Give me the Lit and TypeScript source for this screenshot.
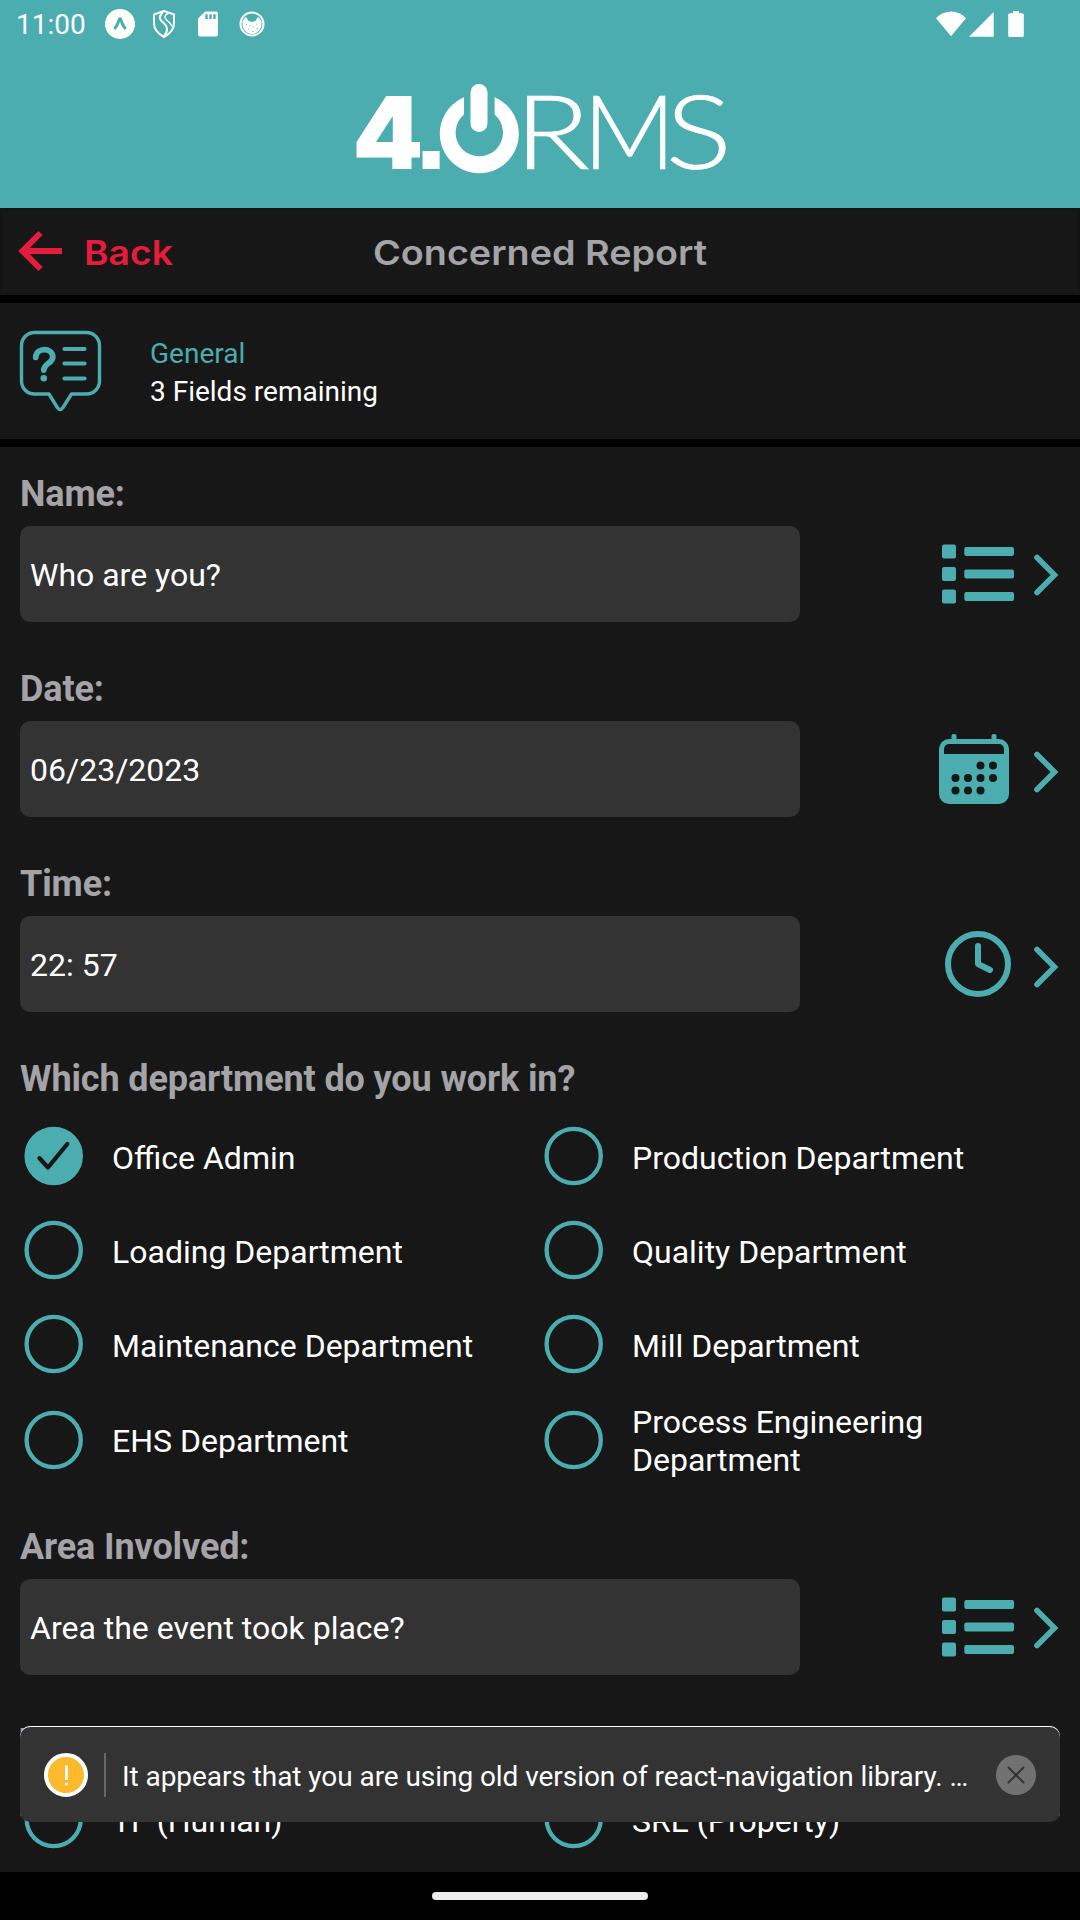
import { LitElement, html, css, svg, nothing } from "lit";
import { customElement, property } from "lit/decorators.js";

type IconName = "list" | "calendar" | "clock";

const calendarDots = [
  [42.5, 36.5], [55, 36.5],
  [17.5, 49], [30, 49], [42.5, 49], [55, 49],
  [17.5, 61.5], [30, 61.5], [42.5, 61.5],
];

const icons = {
  list: svg`${[10.5, 33, 55.5].map(
    (y) => svg`<rect x="4" y=${y} width="14" height="14" rx="2"/><rect x="26.3" y=${y + 2.6} width="49.7" height="9" rx="2"/>`
  )}`,
  calendar: svg`
    <path fill-rule="evenodd" d="M11 10h50a10 10 0 0 1 10 10v45a10 10 0 0 1-10 10h-50a10 10 0 0 1-10-10v-45a10 10 0 0 1 10-10zM6 25h60v-5a5 5 0 0 0-5-5h-50a5 5 0 0 0-5 5z"/>
    <rect x="13.5" y="5" width="5" height="8" rx="2"/><rect x="53.5" y="5" width="5" height="8" rx="2"/>
    ${calendarDots.map(([x, y]) => svg`<circle class="hole" cx=${x} cy=${y} r="4"/>`)}`,
  clock: svg`<g fill="none" stroke="currentColor" stroke-width="6" stroke-linecap="round" stroke-linejoin="round">
    <circle cx="40" cy="40" r="30"/><path d="M40 22v18l12 6"/></g>`,
};

@customElement("form-field")
class FormField extends LitElement {
  @property() label = "";
  @property() value = "";
  @property() icon: IconName = "list";

  static styles = css`
    :host { display: block; margin-bottom: 46px; }
    .label { font-size: 36px; line-height: 42px; font-weight: 700; letter-spacing: -0.12px; color: #a3a3a8; }
    .row { display: flex; align-items: center; margin-top: 11px; }
    .input {
      box-sizing: border-box; width: 780px; height: 96px; border-radius: 10px;
      background: #333; color: #fff; font-size: 32px; line-height: 98px; padding-left: 10px; white-space: pre;
    }
    .icon { width: 80px; height: 80px; margin-left: auto; color: #4badaf; fill: #4badaf; }
    .hole { fill: #171717; }
    .chevron {
      width: 26px; height: 42px; margin-left: 16px; margin-top: 2px; fill: none;
      stroke: #4badaf; stroke-width: 5.6; stroke-linecap: round;
    }
    .chevron.low { margin-top: 6px; }
  `;

  render() {
    return html`
      <div class="label">${this.label}</div>
      <div class="row">
        <div class="input">${this.value}</div>
        <svg class="icon" viewBox="0 0 80 80">${icons[this.icon]}</svg>
        <svg class="chevron ${this.icon === "list" ? "" : "low"}" viewBox="0 0 26 42"><path d="M3 3.5 20.5 21 3 38.500"/></svg>
      </div>`;
  }
}

@customElement("option-group")
class OptionGroup extends LitElement {
  @property() label = "";
  @property({ attribute: false }) options: string[] = [];
  @property() selected = "";

  static styles = css`
    :host { display: block; }
    .label { font-size: 36px; line-height: 42px; font-weight: 700; letter-spacing: -0.12px; color: #a3a3a8; }
    .grid { display: grid; grid-template-columns: 520px 520px; margin-top: 9px; }
    .option { display: flex; align-items: center; min-height: 94px; padding-left: 4px; }
    .tall { min-height: 98px; }
    .radio { width: 60px; height: 60px; flex: none; fill: none; stroke: #4badaf; stroke-width: 4.3; }
    .on { fill: #4badaf; }
    .tick { stroke: #171717; stroke-linecap: round; stroke-linejoin: round; }
    .text { color: #fff; font-size: 32px; line-height: 38px; margin-left: 28px; padding-top: 3px; width: 380px; }
    .tall .text { padding-top: 1px; }
  `;

  render() {
    return html`
      <div class="label">${this.label}</div>
      <div class="grid">
        ${this.options.map((o, i) => html`
          <div class="option ${i >= 6 ? "tall" : ""}">
            <svg class="radio" viewBox="0 0 60 60">
              <circle class=${o === this.selected ? "on" : ""} cx="29.7" cy="30" r="27.1"/>
              ${o === this.selected ? svg`<path class="tick" d="M15.5 32.2 24 41.5 43.3 18"/>` : nothing}
            </svg>
            <div class="text">${o}</div>
          </div>`)}
      </div>`;
  }
}

@customElement("app-root")
class AppRoot extends LitElement {
  static styles = css`
    :host {
      display: flex; flex-direction: column; position: relative; width: 1080px; height: 1920px;
      overflow: hidden; background: #171717; font-family: Roboto, sans-serif;
    }
    svg { display: block; flex: none; }
    .hero { height: 208px; background: #4badaf; flex: none; }
    .status { display: flex; align-items: center; height: 48px; padding: 0 50px 0 16px; color: #fff; fill: #fff; }
    .time { font-size: 28px; line-height: 48px; width: 89px; padding-top: 2px; }
    .signals { margin-left: auto; }
    .teal { fill: #4badaf; }
    .logo { margin: 22px auto 0; fill: #fff; overflow: visible; }
    .four { font: 900 101px Inter, sans-serif; }
    .dot { font: 700 120px "Liberation Sans", sans-serif; }
    .rms { font: 300 102px Lato, sans-serif; stroke: #fff; stroke-width: 0.6; }
    .appbar { box-sizing: border-box; height: 87px; border: 2px solid #141414; border-top-width: 3px; flex: none; }
    .brand { font: 600 34px Inter, sans-serif; }
    .section {
      display: flex; align-items: center; box-sizing: border-box; height: 152px; flex: none;
      border: solid #000; border-width: 8px 0; padding-left: 18px;
    }
    .bubble { fill: none; stroke: #4badaf; stroke-width: 3.4; stroke-linecap: round; stroke-linejoin: round; }
    .summary { margin-left: 46px; font-size: 28px; line-height: 38px; color: #fff; padding-top: 4px; }
    .group { color: #4badaf; }
    .form { flex: 1; min-height: 0; overflow: hidden; padding: 26px 20px 0; }
    .departments { margin-bottom: 37px; }
    .nav { display: flex; align-items: center; justify-content: center; height: 48px; background: #000; flex: none; }
    .pill { width: 216px; height: 8px; border-radius: 4px; background: #ececec; }
    .toast {
      position: absolute; left: 20px; top: 1726px; box-sizing: border-box; width: 1040px; height: 96px;
      display: flex; align-items: center; background: #333; border-radius: 10px; padding: 2px 24px 0; color: #fff;
      box-shadow: inset 0 1px 0 #fff;
    }
    .rule { width: 2px; height: 44px; background: #666; margin: 0 16px; }
    .message { flex: 1; min-width: 0; font-size: 28px; line-height: 36px; letter-spacing: -0.06px; padding-top: 3px; white-space: nowrap; }
  `;

  render() {
    return html`
      <header class="hero">
        <div class="status">
          <span class="time">11:00</span>
          <svg width="180" height="48" viewBox="105 0 180 48">
            <circle cx="120" cy="24" r="15"/>
            <path d="M114.300 29c2.200-2.200 4-6.500 5.200-10h1c1.200 3.500 3 7.800 5.200 10" fill="none" stroke="#4badaf" stroke-width="3"/>
            <g fill="none" stroke="#fff" stroke-width="2" stroke-linejoin="round">
              <path d="M164 11l10 3.500v9c0 6-4.500 10.500-10 13.500-5.500-3-10-7.500-10-13.500v-9z"/>
              <path d="M163 12c-3 3-4.500 6-1.500 9s5.500 4.500 5.500 8-1 5-3 7"/>
              <path d="M168 13.500c-3.500 1.500-4 4-1.500 6.500s4.500 3 5.500 6.500" stroke-width="1.400"/>
            </g>
            <path d="M205 11.500h11a2 2 0 0 1 2 2v21a2 2 0 0 1-2 2h-16a2 2 0 0 1-2-2v-16z"/>
            <path class="teal" d="M205.300 14.300h2.400v4.700h-2.400zM209.300 14.300h2.400v4.700h-2.400zM213.300 14.300h2.400v4.700h-2.400z"/>
            <circle cx="252" cy="24" r="11.500" fill="none" stroke="#fff" stroke-width="2"/>
            <path d="M242.500 21l3.500-4.300 2.500 4.300q3.500 1.300 7 0l2.500-4.300 3.500 4.300c1 8-4 13-9.500 13s-10.500-5-9.500-13z"/>
            <g class="teal"><circle cx="246.500" cy="24.500" r=".6"/><circle cx="250" cy="25.500" r=".5"/><circle cx="256.500" cy="24" r=".6"/><circle cx="253" cy="27" r=".6"/><circle cx="248.500" cy="29" r=".6"/><circle cx="257" cy="28.500" r=".6"/><circle cx="253" cy="31.500" r=".6"/></g>
          </svg>
          <svg class="signals" width="94" height="48" viewBox="936 0 94 48">
            <path d="M936 18.300c8.500-9 21.500-9 30 0l-15 18z"/>
            <path d="M969 36.700h24.700V12z"/>
            <path d="M1013 11h6v2.300h3.300q1.500 0 1.500 1.500v20.700q0 1.500-1.500 1.500h-12.600q-1.500 0-1.500-1.500V14.800q0-1.500 1.500-1.500h3.300z"/>
          </svg>
        </div>
        <svg class="logo" width="400" height="120" viewBox="340 70 400 120">
          <text class="four" x="352.600" y="169">4</text>
          <text class="dot" x="414.500" y="169">.</text>
          <path d="M464 97.300A39.500 39.500 0 1 0 494.600 97.300V114.500A23.700 23.700 0 1 1 464 114.500z"/>
          <rect x="470.500" y="84" width="17" height="48" rx="8.500"/>
          <text class="rms" transform="translate(514.500 169) scale(1.220 1)">R</text>
          <text class="rms" transform="translate(583 169)">M</text>
          <text class="rms" transform="translate(665.500 169) scale(1.220 1)">S</text>
        </svg>
      </header>

      <nav class="appbar">
        <svg width="1076" height="82" viewBox="2 211 1076 82">
          <path d="M62 251H23M40.500 233 22.500 251l18 18" fill="none" stroke="#e51c3c" stroke-width="6"/>
          <text class="brand" x="84" y="264.700" fill="#e51c3c" textLength="89" lengthAdjust="spacingAndGlyphs">Back</text>
          <text class="brand" x="373" y="264.700" fill="#a3a3a8" textLength="334" lengthAdjust="spacingAndGlyphs">Concerned Report</text>
        </svg>
      </nav>

      <section class="section">
        <svg class="bubble" width="86" height="86" viewBox="18 328 86 86">
          <path d="M34 332.500h52.500a13 13 0 0 1 13 13V381a13 13 0 0 1-13 13H71.500L63 407.500q-2.800 4-5.700 0L49 394H34.500a13 13 0 0 1-13-13v-35.500a13 13 0 0 1 13-13z"/>
          <path d="M35.700 357.300C36.300 347 52.500 347.300 52.800 357 53 363 44 363.500 43.800 370" stroke-width="5.800"/>
          <circle cx="43.800" cy="378.300" r="3.300" fill="#4badaf" stroke="none"/>
          <path d="M64.500 349h20M64.500 363.500h20M64.500 378.500h20" stroke-width="4.200"/>
        </svg>
        <div class="summary"><div class="group">General</div><div>3 Fields remaining</div></div>
      </section>

      <main class="form">
        <form-field label="Name:" value="Who are you?" icon="list"></form-field>
        <form-field label="Date:" value="06/23/2023" icon="calendar"></form-field>
        <form-field label="Time:" value="22: 57" icon="clock"></form-field>
        <option-group class="departments" label="Which department do you work in?" selected="Office Admin"
          .options=${["Office Admin", "Production Department", "Loading Department", "Quality Department",
            "Maintenance Department", "Mill Department", "EHS Department", "Process Engineering Department"]}></option-group>
        <form-field label="Area Involved:" value="Area the event took place?" icon="list"></form-field>
        <option-group label="Type:" .options=${["TF (Human)", "SRE (Property)"]}></option-group>
      </main>

      <footer class="nav"><div class="pill"></div></footer>

      <aside class="toast">
        <svg width="44" height="44" viewBox="0 0 44 44">
          <circle cx="22" cy="22" r="20" fill="#fbb92d" stroke="#fff" stroke-width="4"/>
          <path d="M22.500 12.500v14.500M22.500 29.800v2.500" stroke="#fff" stroke-width="2.800"/>
        </svg>
        <div class="rule"></div>
        <div class="message">It appears that you are using old version of react-navigation library. …</div>
        <svg width="40" height="40" viewBox="0 0 40 40">
          <circle cx="20" cy="20" r="20" fill="#717171"/>
          <path d="M12.500 12.500l15 15M27.500 12.500l-15 15" stroke="#333" stroke-width="2" stroke-linecap="round"/>
        </svg>
      </aside>`;
  }
}
